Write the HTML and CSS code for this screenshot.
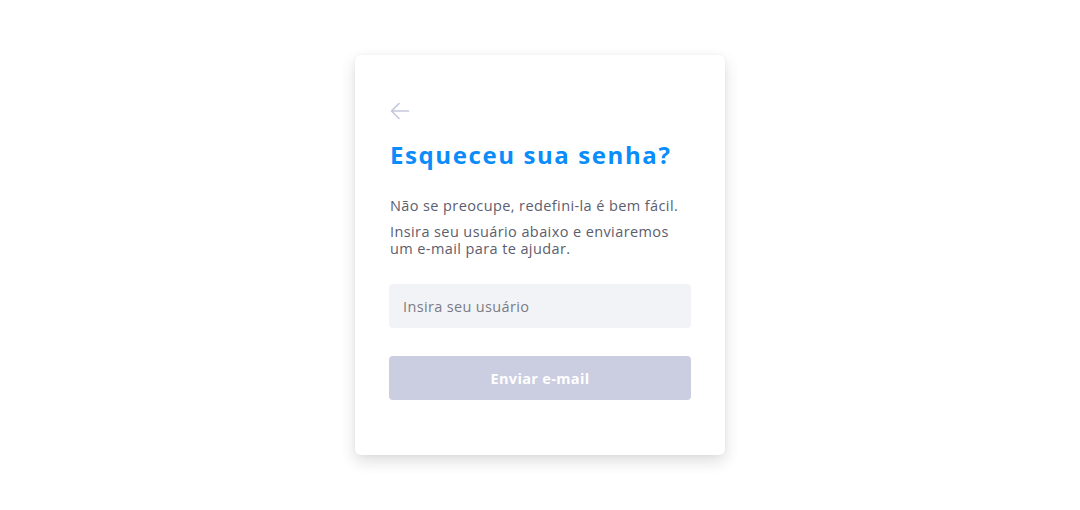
FILE: index.html
```html
<!DOCTYPE html>
<html lang="pt-BR">
<head>
<meta charset="utf-8">
<title>Esqueceu sua senha?</title>
<link rel="stylesheet" href="styles.css">
</head>
<body>
<main class="page">
  <section class="card">
    <button class="back" aria-label="Voltar">
      <svg width="20" height="18" viewBox="0 0 20 18" fill="none" stroke="#c5c6dc" stroke-width="1.6" stroke-linecap="round" stroke-linejoin="round">
        <path d="M18.5 9H1.5M9 1.5L1.5 9 9 16.5"/>
      </svg>
    </button>
    <h1 class="title">Esqueceu sua senha?</h1>
    <p class="text first">Não se preocupe, redefini-la é bem fácil.</p>
    <p class="text">Insira seu usuário abaixo e enviaremos um e-mail para te ajudar.</p>
    <input class="field" type="text" placeholder="Insira seu usuário">
    <button class="submit" disabled>Enviar e-mail</button>
  </section>
</main>
</body>
</html>
```
FILE: styles.css
```css
* { box-sizing: border-box; }
html, body { margin: 0; padding: 0; background: #ffffff; }
body { font-family: "Open Sans", "Noto Sans", sans-serif; }
.page {
  display: flex;
  justify-content: center;
  padding-top: 55px;
  height: 510px;
}
.card {
  width: 370px;
  height: 400px;
  background: #fff;
  border-radius: 6px;
  box-shadow: 0 6px 16px rgba(0, 0, 0, 0.14), 0 0 4px rgba(0,0,0,0.04);
  padding: 47px 34px 0 34px;
  display: flex;
  flex-direction: column;
}
.back {
  width: 20px;
  height: 18px;
  padding: 0;
  margin: 0 0 0 1px;
  border: 0;
  background: none;
  display: block;
}
.back svg { display: block; }
.title {
  margin: 20px 0 0 1px;
  font-size: 24px;
  line-height: 30px;
  font-weight: 700;
  letter-spacing: 1.6px;
  color: #0a8cfa;
}
.text {
  margin: 0 0 0 1px;
  font-size: 14.5px;
  color: #5c5d6e;
  line-height: 17px;
  letter-spacing: 0.4px;
}
.text.first { margin-top: 27px; margin-bottom: 9px; }
.field {
  margin-top: 27px;
  height: 44px;
  width: 302px;
  border: 0;
  border-radius: 4px;
  background: #f2f3f7;
  padding: 0 14px;
  font-family: inherit;
  font-size: 14.5px;
  letter-spacing: 0.35px;
  color: #333;
  outline: none;
}
.field::placeholder { color: #7b7b86; }
.submit {
  margin-top: 28px;
  height: 44px;
  width: 302px;
  border: 0;
  border-radius: 4px;
  background: #cbcde0;
  color: #ffffff;
  font-family: inherit;
  font-weight: 700;
  font-size: 14.5px;
  letter-spacing: 0.35px;
}
```
